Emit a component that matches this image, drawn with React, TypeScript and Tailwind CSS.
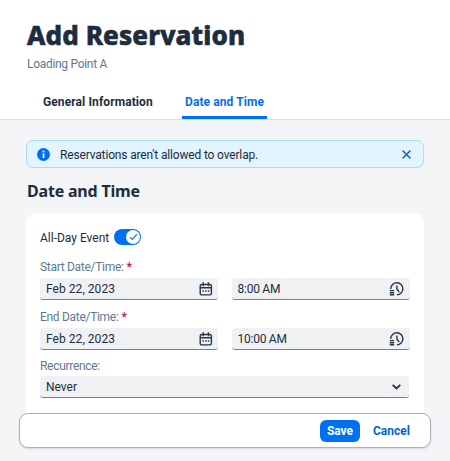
import type { ReactNode } from 'react';

function CalendarIcon() {
  return (
    <svg width="14" height="14" viewBox="0 0 14 14" fill="none" stroke="#24364a" strokeWidth="1.4">
      <rect x="1.2" y="2.5" width="11.2" height="10.4" rx="1.6" />
      <path d="M1.2 5.8H12.4M4.2 .3V4.3M9.4 .3V4.3" />
      <path d="M3.4 9H4.9M6.1 9H7.6M8.8 9H10.3" strokeWidth="1.5" />
    </svg>
  );
}

function TimeIcon() {
  return (
    <svg width="15" height="14" viewBox="0 0 15 14" fill="none" stroke="#24364a" strokeWidth="1.4">
      <path d="M1.7 7V6.6A6.1 6.1 0 1 1 7.9 12.9" />
      <path d="M7.9 3.4V7L10.2 10.2" />
      <path d="M.8 8.6H5.2M.8 10.7H5.2M.8 12.8H5.2" strokeWidth="1.4" />
    </svg>
  );
}

function Field({ children, icon, className }: { children: ReactNode; icon: ReactNode; className: string }) {
  return (
    <div className={`flex h-[22px] items-center justify-between rounded-[3px] border-b border-[#6f8294] bg-[#eff1f2] text-[#1d2d3e] ${className}`}>
      {children}
      {icon}
    </div>
  );
}

function Label({ children, required }: { children: string; required?: boolean }) {
  return (
    <div className="flex h-4 items-center text-[12px] leading-4 tracking-[-0.3px] whitespace-nowrap text-[#62788f]">
      <span>{children}</span>
      {required && <span className="ml-[3px] font-bold text-[#ba2633]">*</span>}
    </div>
  );
}

function DateField() {
  return (
    <Field className="w-[178px] pr-[5px] pl-1.5" icon={<CalendarIcon />}>
      <span className="pt-px tracking-[0.05px]">Feb 22, 2023</span>
    </Field>
  );
}

function TimeField({ value }: { value: string }) {
  return (
    <Field className="w-[179px] pr-[6px] pl-1.5" icon={<TimeIcon />}>
      <span className="pt-px tracking-[-0.25px]">{value}</span>
    </Field>
  );
}

export default function App() {
  return (
    <div className="h-[461px] w-[450px] overflow-hidden bg-[#f4f5f7] font-['Roboto',sans-serif] text-[12px] text-[#1d2d3e]">
      <header className="flex h-[120px] flex-col border-b border-[#dcdfe3] bg-white pt-[19px]">
        <h1 className="ml-[27px] h-8 font-['Noto_Sans',sans-serif] text-[26px] leading-8 font-extrabold tracking-[0.1px] whitespace-nowrap [-webkit-text-stroke:0.6px_#1d2d3e]">Add Reservation</h1>
        <p className="mt-1 ml-[27px] h-[18px] leading-[19px] tracking-[-0.3px] text-[#62788f]">Loading Point A</p>
        <nav className="mt-[18px] flex h-7 pl-[43px] leading-[22px] font-bold tracking-[0.1px]">
          <span className="w-[139px] whitespace-nowrap">General Information</span>
          <span className="w-[85px] border-b-[3px] border-[#0070f2] pl-[3px] whitespace-nowrap text-[#0070f2]">Date and Time</span>
        </nav>
      </header>

      <main className="px-[26px] pt-5">
        <div className="flex h-[28px] w-[398px] items-center rounded-[7px] border border-[#a9dcf5] bg-[#e1f4ff] pl-2.5">
          <svg width="13" height="13" viewBox="0 0 13 13">
            <circle cx="6.5" cy="6.5" r="6.5" fill="#0070f2" />
            <path d="M6.5 5.4V10" stroke="white" strokeWidth="1.7" />
            <circle cx="6.5" cy="3.4" r="1" fill="white" />
          </svg>
          <span className="ml-[10px] pt-px tracking-[-0.16px] whitespace-nowrap">Reservations aren't allowed to overlap.</span>
          <svg className="mr-3 ml-auto" width="9" height="9" viewBox="0 0 9 9" stroke="#1b6fd0" strokeWidth="1.5">
            <path d="M.6 .6L8.4 8.4M8.4 .6L.6 8.4" />
          </svg>
        </div>
        <h2 className="mt-[11px] h-6 pl-px font-['Noto_Sans',sans-serif] text-[16px] leading-6 font-bold tracking-[-0.2px]">Date and Time</h2>

        <section className="mt-[10px] h-[212px] w-[398px] rounded-[10px] bg-white px-[14px] pt-[15px]">
          <div className="flex h-[18px] items-center">
            <span className="w-[74px] pt-px whitespace-nowrap">All-Day Event</span>
            <span className="flex h-4 w-[27px] items-center justify-end rounded-full bg-[#0070f2] pr-px">
              <span className="flex size-3.5 items-center justify-center rounded-full bg-white">
                <svg width="9" height="8" viewBox="0 0 9 8" fill="none" stroke="#0070f2" strokeWidth="1.1">
                  <path d="M1 4.2L3.2 6.4L8 1.2" />
                </svg>
              </span>
            </span>
          </div>
          <div className="mt-[13px]">
            <Label required>Start Date/Time:</Label>
            <div className="mt-[3px] flex gap-[14px]">
              <DateField />
              <TimeField value="8:00 AM" />
            </div>
          </div>
          <div className="mt-[9px]">
            <Label required>End Date/Time:</Label>
            <div className="mt-[3px] flex gap-[14px]">
              <DateField />
              <TimeField value="10:00 AM" />
            </div>
          </div>
          <div className="mt-2">
            <Label>Recurrence:</Label>
            <div className="mt-[2px]">
              <Field
                className="w-[369px] pr-[8px] pl-1.5"
                icon={
                  <svg width="9" height="6" viewBox="0 0 9 6" fill="none" stroke="#24364a" strokeWidth="1.9">
                    <path d="M.7 .9L4.5 4.4L8.3 .9" />
                  </svg>
                }
              >
                <span className="pt-px">Never</span>
              </Field>
            </div>
          </div>
        </section>
      </main>

      <footer className="relative mt-[-12px] ml-[19px] flex h-[35px] w-[412px] items-center justify-end rounded-[9px] border border-[#a8b3bf] bg-white pr-5 text-[12px] font-bold shadow-[0_1px_2px_#8896a555]">
        <button className="flex h-[22px] w-10 items-center justify-center rounded-[6px] bg-[#0070f2] pt-px text-white">Save</button>
        <button className="ml-[13px] w-[37px] pt-px text-left text-[#0064d9]">Cancel</button>
      </footer>
    </div>
  );
}
